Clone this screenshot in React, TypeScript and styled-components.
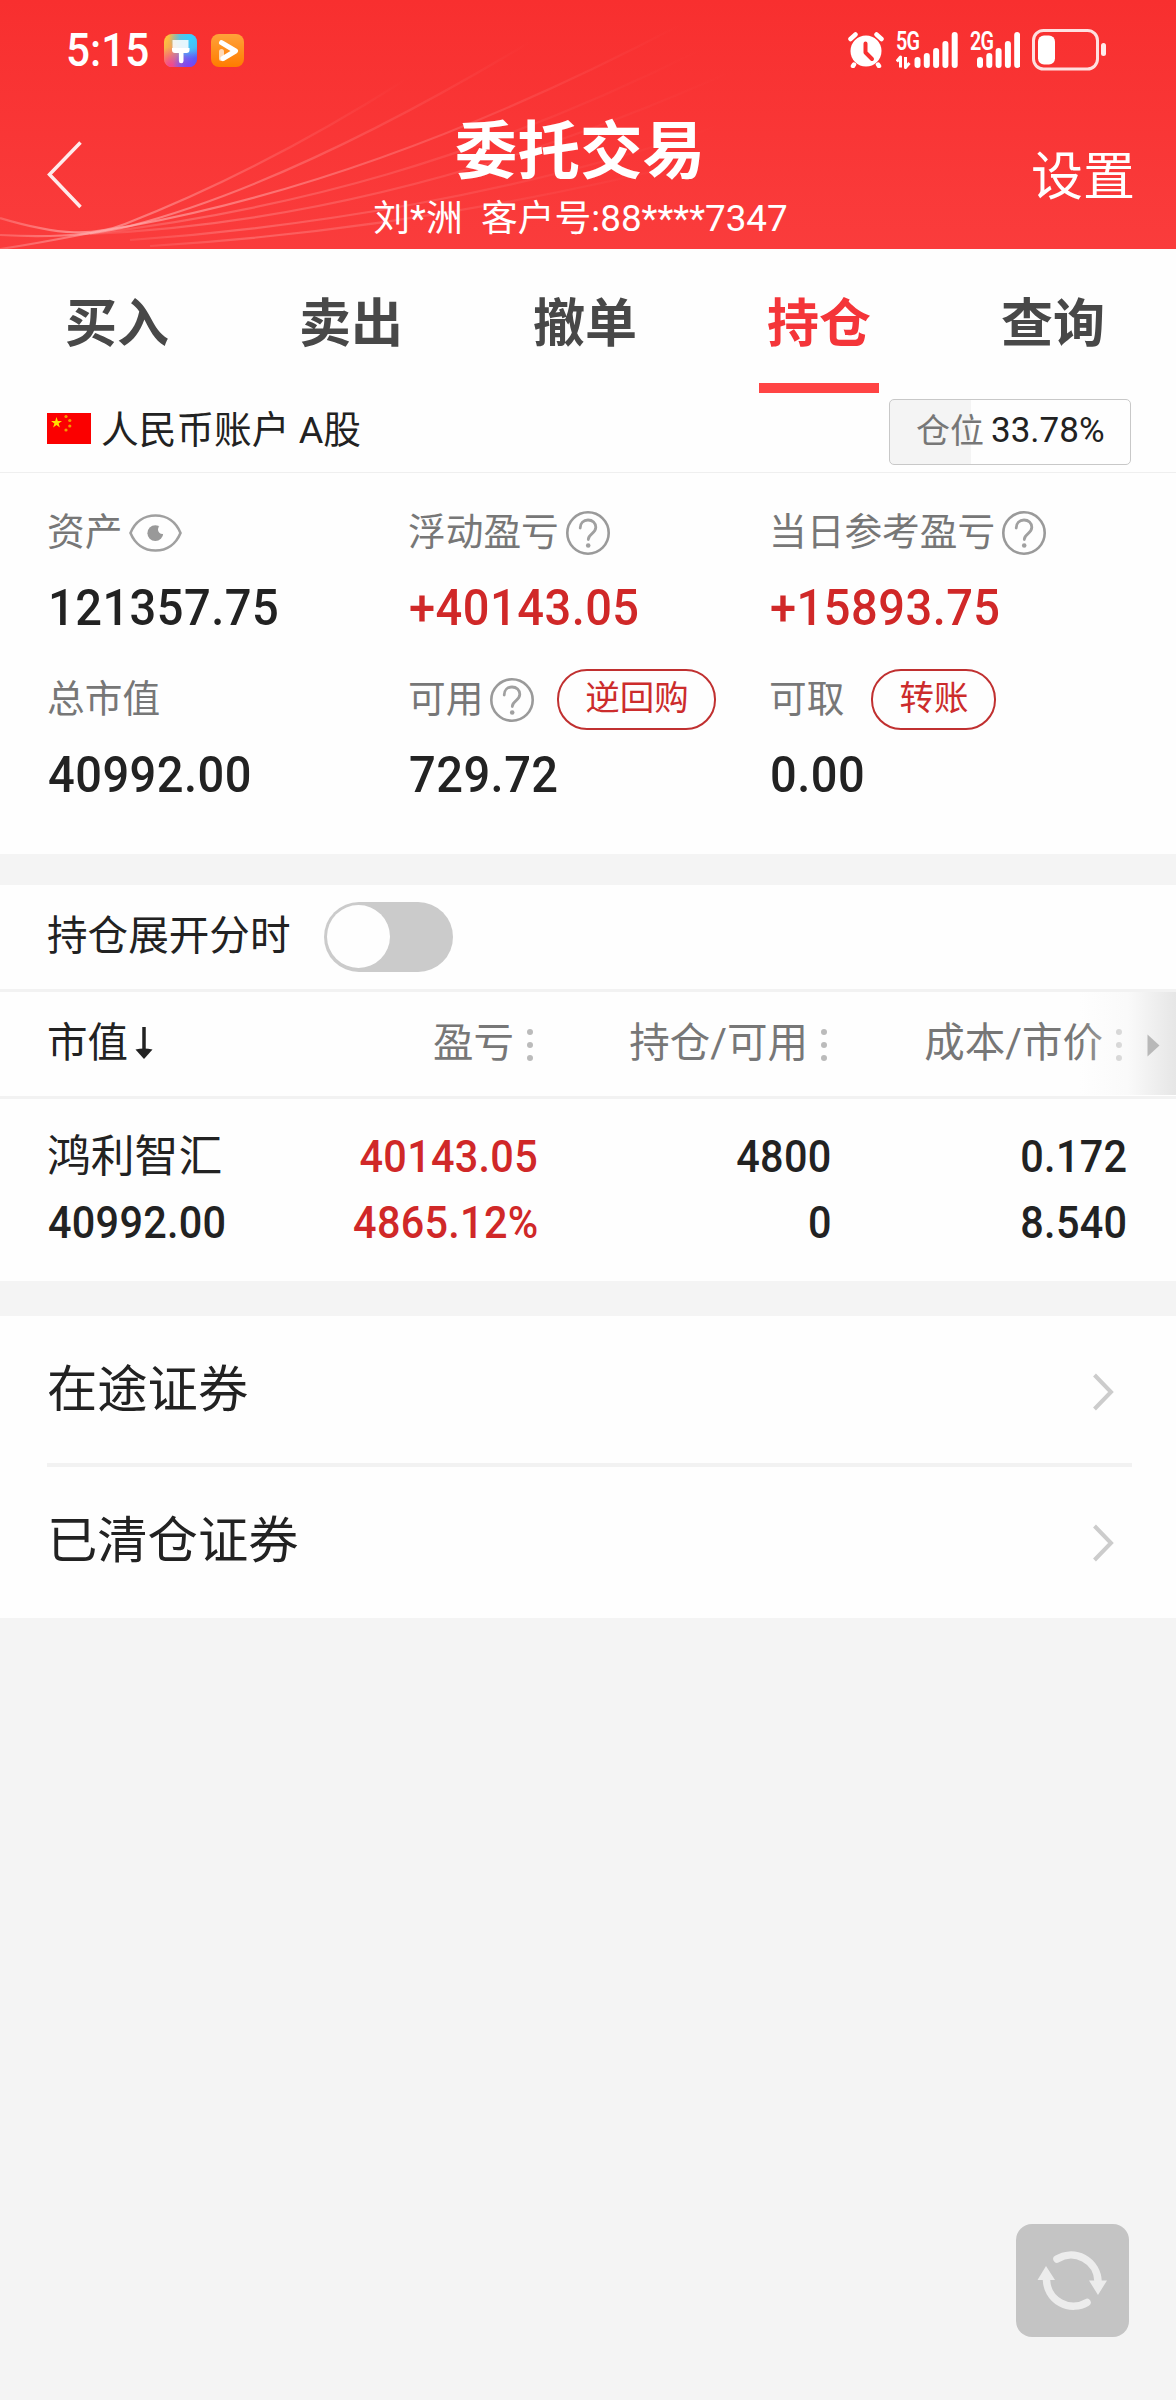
import React, { useState } from 'react';
import styled, { createGlobalStyle } from 'styled-components';

const GlobalStyle = createGlobalStyle`
  * { box-sizing: border-box; }
  body {
    margin: 0;
    background: #f4f4f4;
    color: #222;
    font-family: Roboto, "Noto Sans CJK SC", sans-serif;
  }
  button { font: inherit; border: 0; padding: 0; margin: 0; background: none; color: inherit; cursor: pointer; }
  svg { display: block; flex: none; }
`;

const Page = styled.div`
  position: relative;
  width: 1176px;
  height: 2400px;
  overflow: hidden;
  background: #f4f4f4;
`;

const Header = styled.header`
  position: relative;
  height: 249px;
  color: #fff;
  background: linear-gradient(#f82f2f, #fa3c3c);
`;

const HeaderLines = styled.svg`
  position: absolute;
  left: 0;
  top: 0;
`;

const StatusBar = styled.div`
  position: relative;
  height: 98px;
  display: flex;
  justify-content: space-between;
  padding: 0 70px 0 66px;
`;

const StatusGroup = styled.div<{ $gap: number }>`
  display: flex;
  align-items: center;
  height: 100px;
  gap: ${(p) => p.$gap}px;
`;

const Clock = styled.span`
  width: 84px;
  font-size: 46px;
  font-weight: 500;
  line-height: 54px;
  white-space: nowrap;
  transform: scaleX(0.92);
  transform-origin: left;
`;

const NavBar = styled.div`
  position: relative;
  height: 151px;
  display: grid;
  grid-template-columns: 200px 1fr 200px;
`;

const BackButton = styled.button`
  display: flex;
  align-items: flex-start;
  padding: 42px 0 0 45px;
`;

const TitleBlock = styled.div`
  display: flex;
  flex-direction: column;
  align-items: center;
  padding-top: 19px;
`;

const Title = styled.h1`
  margin: 0 0 0 -16px;
  font-size: 62.6px;
  font-weight: 700;
  line-height: 70px;
`;

const Subtitle = styled.div`
  margin: 10px 0 0 -15px;
  font-size: 36.8px;
  line-height: 44px;
  white-space: pre;
`;

const SettingsButton = styled.button`
  justify-self: end;
  align-self: start;
  margin: 50px 41px 0 0;
  font-size: 52px;
  line-height: 60px;
`;

const Tabs = styled.nav`
  display: grid;
  grid-template-columns: repeat(5, 1fr);
  height: 144px;
  padding-right: 6px;
  background: #fefefe;
`;

const Tab = styled.button<{ $active: boolean }>`
  display: flex;
  flex-direction: column;
  align-items: center;
  justify-content: space-between;
  padding-top: 44px;
  font-size: 52px;
  font-weight: 700;
  line-height: 64px;
  color: ${(p) => (p.$active ? '#f43539' : '#484848')};
  &::after {
    content: '';
    width: 120px;
    height: 10px;
    background: ${(p) => (p.$active ? '#ff4444' : 'transparent')};
  }
`;

const AccountRow = styled.div`
  display: flex;
  align-items: center;
  height: 80px;
  padding: 0 45px 2px 47px;
  background: #fefefe;
  border-bottom: 1px solid #efefef;
`;

const FlagSlot = styled.span`
  margin-bottom: 6px;
`;

const AccountName = styled.span`
  flex: 1;
  margin: 0 0 3px 10px;
  font-size: 37.7px;
  line-height: 46px;
`;

const PositionBox = styled.div`
  display: flex;
  align-items: center;
  width: 242px;
  height: 66px;
  padding: 0 0 2px 26px;
  gap: 7px;
  border: 1px solid #c8c8c8;
  border-radius: 5px;
  background: linear-gradient(to right, #f4f4f4 33.78%, transparent 33.78%);
  font-size: 35px;
  line-height: 60px;
  white-space: nowrap;
`;

const Muted = styled.span`
  color: #777;
  font-size: 34px;
`;

const Summary = styled.section`
  display: grid;
  grid-template-columns: 361px 361px 1fr;
  grid-template-rows: 167px 1fr;
  height: 381px;
  padding: 28px 0 0 47px;
  background: #fefefe;
`;

const SummaryLabel = styled.div`
  display: flex;
  align-items: center;
  height: 64px;
  color: #777;
  font-size: 37.7px;
  line-height: 46px;
  white-space: nowrap;
`;

const LabelText = styled.span`
  margin-top: -3px;
`;

const SummaryValue = styled.div<{ $up?: boolean }>`
  width: 300px;
  margin: 11px 0 0 1px;
  font-size: 50.6px;
  font-weight: 500;
  line-height: 64px;
  letter-spacing: 0.5px;
  transform: scaleX(0.93);
  transform-origin: left;
  color: ${(p) => (p.$up ? '#d02828' : '#222')};
`;

const IconSlot = styled.span<{ $gap: number }>`
  margin-left: ${(p) => p.$gap}px;
`;

const Pill = styled.button<{ $gap: number; $width: number }>`
  width: ${(p) => p.$width}px;
  height: 61px;
  margin: -1px 0 0 ${(p) => p.$gap}px;
  padding-bottom: 4px;
  border: 2px solid #c03030;
  border-radius: 30px;
  color: #cc2c2c;
  font-size: 34.5px;
  line-height: 48px;
`;

const Card = styled.section`
  background: #fefefe;
`;

const Holdings = styled(Card)`
  margin-top: 31px;
  height: 396px;
`;

const SwitchRow = styled.div`
  display: flex;
  align-items: center;
  height: 107px;
  padding: 0 48px;
  border-bottom: 3px solid #f2f2f2;
  font-size: 40.6px;
`;

const SwitchLabel = styled.span`
  width: 277px;
  margin: -9px 0 0 -1px;
`;

const Switch = styled.button<{ $on: boolean }>`
  display: flex;
  justify-content: ${(p) => (p.$on ? 'flex-end' : 'flex-start')};
  width: 129px;
  height: 70px;
  padding: 3px;
  border-radius: 35px;
  background: ${(p) => (p.$on ? '#f43539' : '#cbcbcb')};
  &::after {
    content: '';
    width: 63px;
    height: 63px;
    border-radius: 50%;
    background: #fefefe;
  }
`;

const Columns = styled.div`
  display: grid;
  grid-template-columns: 243px 247px 294px 295px;
`;

const TableHead = styled(Columns)`
  position: relative;
  height: 107px;
  padding: 0 48px;
  border-bottom: 3px solid #f2f2f2;
`;

const HeadCell = styled.div<{ $first?: boolean }>`
  display: flex;
  align-items: center;
  justify-content: ${(p) => (p.$first ? 'flex-start' : 'flex-end')};
  gap: ${(p) => (p.$first ? 7 : 13)}px;
  padding: 0 ${(p) => (p.$first ? 0 : 5)}px 10px 0;
  margin-left: ${(p) => (p.$first ? -1 : 0)}px;
  color: ${(p) => (p.$first ? '#222' : '#777')};
  font-size: 40.5px;
  white-space: nowrap;
`;

const SortArrow = styled.svg`
  margin-top: 4px;
`;

const Dots = styled.span`
  width: 6px;
  height: 6px;
  margin-top: 11px;
  border-radius: 50%;
  background: #bbb;
  box-shadow: 0 -13px #bbb, 0 13px #bbb;
`;

const ScrollShade = styled.div`
  position: absolute;
  right: 0;
  top: 0;
  display: flex;
  align-items: center;
  justify-content: flex-end;
  width: 96px;
  height: 103px;
  padding: 3px 16px 0 0;
  background: linear-gradient(to right, rgba(254, 254, 254, 0), rgba(247, 247, 247, 0.6) 50%, #e6e6e6);
`;

const TableRow = styled(Columns)`
  height: 182px;
  padding: 30px 48px 0;
`;

const Cell = styled.div<{ $first?: boolean; $up?: boolean }>`
  display: flex;
  flex-direction: column;
  gap: 10px;
  align-items: ${(p) => (p.$first ? 'flex-start' : 'flex-end')};
  font-size: 45px;
  font-weight: 500;
  line-height: 56px;
  white-space: nowrap;
  color: ${(p) => (p.$up ? '#d02828' : '#222')};
`;

const Figure = styled.span<{ $left?: boolean }>`
  transform: scaleX(0.92);
  transform-origin: ${(p) => (p.$left ? 'left' : 'right')};
  letter-spacing: 0.3px;
`;

const StockName = styled.span`
  height: 56px;
  margin-left: -1px;
  font-size: 43.8px;
  font-weight: 400;
  line-height: 56px;
`;

const Links = styled(Card)`
  display: flex;
  flex-direction: column;
  height: 302px;
  margin-top: 35px;
  padding: 0 44px 0 47px;
`;

const LinkRow = styled.button`
  display: flex;
  align-items: center;
  justify-content: space-between;
  height: 151px;
  padding: 0 18px 0 0;
  font-size: 50.3px;
  line-height: 60px;
  &:first-child {
    padding-top: 4px;
    border-bottom: 4px solid #f2f2f2;
  }
`;

const LinkText = styled.span`
  margin-top: -4px;
`;

const RefreshButton = styled.button`
  position: absolute;
  left: 1016px;
  top: 2224px;
  display: flex;
  width: 113px;
  height: 113px;
  border-radius: 16px;
  background: #c4c4c4;
`;

const ThemeIcon = () => (
  <svg width="33" height="33" viewBox="0 0 33 33">
    <defs>
      <linearGradient id="theme-a" x1="0" y1="0.2" x2="1" y2="0.8">
        <stop offset="0" stopColor="#ffc23d" />
        <stop offset="0.3" stopColor="#f0a05c" />
        <stop offset="0.62" stopColor="#6c8df5" />
        <stop offset="1" stopColor="#4c5cf6" />
      </linearGradient>
      <radialGradient id="theme-b" cx="0.8" cy="0.1" r="0.65">
        <stop offset="0" stopColor="#35d0ff" />
        <stop offset="0.5" stopColor="#45c8f5" stopOpacity="0.85" />
        <stop offset="1" stopColor="#45c8f5" stopOpacity="0" />
      </radialGradient>
      <radialGradient id="theme-c" cx="0.2" cy="1" r="0.6">
        <stop offset="0" stopColor="#ff3f86" />
        <stop offset="1" stopColor="#ff3f86" stopOpacity="0" />
      </radialGradient>
      <radialGradient id="theme-d" cx="0.75" cy="1" r="0.5">
        <stop offset="0" stopColor="#8a3df0" />
        <stop offset="1" stopColor="#6a4df0" stopOpacity="0" />
      </radialGradient>
    </defs>
    <rect width="33" height="33" rx="8" fill="url(#theme-a)" />
    <rect width="33" height="33" rx="8" fill="url(#theme-b)" />
    <rect width="33" height="33" rx="8" fill="url(#theme-c)" />
    <rect width="33" height="33" rx="8" fill="url(#theme-d)" />
    <path d="M8.500 6h16v8h-16z" fill="#fff" opacity="0.85" />
    <path d="M8 14h17.500v2q0 3-3 3h-3v8a2.300 2.300 0 0 1-4.600 0v-8h-3.900q-3 0-3-3z" fill="#fff" />
  </svg>
);

const VideoIcon = () => (
  <svg width="33" height="33" viewBox="0 0 33 33">
    <defs>
      <linearGradient id="video-bg" x1="0" y1="0" x2="0" y2="1">
        <stop offset="0" stopColor="#ffa23a" />
        <stop offset="1" stopColor="#ff7c00" />
      </linearGradient>
    </defs>
    <rect width="33" height="33" rx="8" fill="url(#video-bg)" />
    <path d="M10.500 17.500v7" stroke="#ffd9b5" strokeWidth="5" strokeLinecap="round" />
    <path d="M10.500 8.700 24.500 17 12 24.500" fill="none" stroke="#fff" strokeWidth="5" strokeLinecap="round" strokeLinejoin="round" />
  </svg>
);

const AlarmIcon = () => (
  <svg width="36" height="36" viewBox="0 0 36 36">
    <circle cx="18" cy="19" r="15.500" fill="#fff" />
    <path d="M2.500 7 7.500 2.500M33.500 7l-5-4.500M6 32.500l-1 1.500M30 32.500l1 1.500" stroke="#fff" strokeWidth="4.500" strokeLinecap="round" />
    <path d="M17.500 11.500v9l6.500 6.500" fill="none" stroke="#f83131" strokeWidth="4" strokeLinecap="round" strokeLinejoin="round" />
  </svg>
);

const Network = styled.div<{ $width: number }>`
  position: relative;
  width: ${(p) => p.$width}px;
  height: 38px;
`;

const NetworkName = styled.span`
  position: absolute;
  left: 0;
  top: -1px;
  font-size: 26px;
  font-weight: 600;
  line-height: 22px;
  letter-spacing: -1px;
  transform: scaleX(0.76);
  transform-origin: left;
`;

const Bars = ({ left, width }: { left: number; width: number }) => (
  <svg width={width} height="38" viewBox={`0 0 ${width} 38`}>
    {[11, 15, 20, 27, 36].map((h, i) => (
      <rect key={h} x={left + i * 9.3} y={37 - h} width="6" height={h} rx="3" fill="#fff" />
    ))}
    {left > 10 && (
      <path d="M0.800 30.500 4.500 26v10.500M9.500 26v10.500l4-4.500" fill="none" stroke="#fff" strokeWidth="3" strokeLinejoin="round" />
    )}
  </svg>
);

const BatteryIcon = () => (
  <svg width="74" height="42" viewBox="0 0 74 42">
    <rect x="1.500" y="1.500" width="64" height="38.500" rx="10" fill="none" stroke="#fff" strokeOpacity="0.85" strokeWidth="3" />
    <rect x="6" y="6.500" width="17" height="29" rx="6" fill="#fff" />
    <rect x="69" y="14" width="5" height="13" rx="2.500" fill="#fff" fillOpacity="0.9" />
  </svg>
);

const FlagIcon = () => (
  <svg width="44" height="31" viewBox="0 0 44 31">
    <rect width="44" height="31" fill="#fb0000" />
    <path d="M9.500 4l1.300 4h4.200l-3.400 2.500 1.300 4-3.400-2.500-3.400 2.500 1.300-4L4 8h4.200z" fill="#ffe000" />
    <g fill="#f39a00">
      <circle cx="19" cy="3.500" r="1.600" />
      <circle cx="22.800" cy="7.500" r="1.600" />
      <circle cx="22.800" cy="13" r="1.600" />
      <circle cx="19" cy="17" r="1.600" />
    </g>
  </svg>
);

const EyeIcon = () => (
  <svg width="53" height="38" viewBox="0 0 53 38">
    <path d="M1.500 19C6 8 15 1.500 26.500 1.500S47 8 51.500 19C47 30 38 36.500 26.500 36.500S6 30 1.500 19z" fill="none" stroke="#a0a0a0" strokeWidth="2.600" />
    <circle cx="26.300" cy="19.200" r="7.900" fill="#999" />
    <circle cx="33.500" cy="15.500" r="4.500" fill="#fefefe" />
  </svg>
);

const HelpIcon = () => (
  <svg width="44" height="44" viewBox="0 0 44 44">
    <circle cx="22" cy="22" r="20.700" fill="none" stroke="#9a9a9a" strokeWidth="2.600" />
    <path d="M14.200 17c0-5 3.300-8 7.800-8s7.800 3 7.800 7.300c0 3.300-2 4.900-4 6.500-2 1.600-3.500 2.900-3.500 5.700" fill="none" stroke="#a0a0a0" strokeWidth="2.800" strokeLinecap="round" />
    <circle cx="22.200" cy="34.500" r="2.300" fill="#a0a0a0" />
  </svg>
);

const ChevronIcon = () => (
  <svg width="22" height="38" viewBox="0 0 22 38">
    <path d="M2.500 2 19 19 2.500 36" fill="none" stroke="#ccc" strokeWidth="4" />
  </svg>
);

const curves = [
  'M0 218C60 236 95 236 125 224C220 187 310 140 405 80',
  'M0 235C50 238 90 236 130 226C260 192 400 120 530 42',
  'M0 249C60 240 90 232 130 226C300 195 480 130 680 25',
  'M90 234C290 210 480 160 700 50',
  'M90 234C290 225 500 175 730 72',
  'M130 240C300 228 520 195 720 125',
  'M150 246C330 235 520 205 700 160',
];

const summary = [
  { label: '资产', icon: 'eye', value: '121357.75' },
  { label: '浮动盈亏', icon: 'help', value: '+40143.05', up: true },
  { label: '当日参考盈亏', icon: 'help', value: '+15893.75', up: true },
  { label: '总市值', value: '40992.00' },
  { label: '可用', icon: 'help', value: '729.72', action: '逆回购', actionGap: 23, actionWidth: 159 },
  { label: '可取', value: '0.00', action: '转账', actionGap: 27, actionWidth: 125 },
];

const tabs = ['买入', '卖出', '撤单', '持仓', '查询'];

export default function App() {
  const [tab, setTab] = useState('持仓');
  const [expanded, setExpanded] = useState(false);

  return (
    <>
      <GlobalStyle />
      <Page>
        <Header>
          <HeaderLines width="760" height="249" viewBox="0 0 760 249">
            <defs>
              <linearGradient id="fade" x1="0" y1="0" x2="1" y2="0">
                <stop offset="0" stopColor="#ffb0b0" stopOpacity="0.35" />
                <stop offset="0.18" stopColor="#ffb0b0" stopOpacity="0.75" />
                <stop offset="0.42" stopColor="#ffa0a0" stopOpacity="0.6" />
                <stop offset="0.72" stopColor="#ff9090" stopOpacity="0.25" />
                <stop offset="1" stopColor="#ff9090" stopOpacity="0" />
              </linearGradient>
            </defs>
            {curves.map((d, i) => (
              <path key={d} d={d} fill="none" stroke="url(#fade)" strokeWidth="2.200" opacity={i < 3 ? 0.9 : 0.45} />
            ))}
          </HeaderLines>
          <StatusBar>
            <StatusGroup $gap={14}>
              <Clock>5:15</Clock>
              <ThemeIcon />
              <VideoIcon />
            </StatusGroup>
            <StatusGroup $gap={12}>
              <AlarmIcon />
              <Network $width={62}>
                <NetworkName>5G</NetworkName>
                <Bars left={18.5} width={62} />
              </Network>
              <Network $width={50}>
                <NetworkName>2G</NetworkName>
                <Bars left={7} width={50} />
              </Network>
              <BatteryIcon />
            </StatusGroup>
          </StatusBar>
          <NavBar>
            <BackButton aria-label="返回">
              <svg width="38" height="70" viewBox="0 0 38 70">
                <path d="M35.500 2.500 4.500 34.500 35.500 67" fill="none" stroke="#fff" strokeOpacity="0.9" strokeWidth="3.500" />
              </svg>
            </BackButton>
            <TitleBlock>
              <Title>委托交易</Title>
              <Subtitle>{'刘*洲  客户号:88****7347'}</Subtitle>
            </TitleBlock>
            <SettingsButton>设置</SettingsButton>
          </NavBar>
        </Header>

        <Tabs>
          {tabs.map((name) => (
            <Tab key={name} $active={name === tab} onClick={() => setTab(name)}>
              {name}
            </Tab>
          ))}
        </Tabs>

        <AccountRow>
          <FlagSlot>
            <FlagIcon />
          </FlagSlot>
          <AccountName>人民币账户 A股</AccountName>
          <PositionBox>
            <Muted>仓位</Muted>
            <span>33.78%</span>
          </PositionBox>
        </AccountRow>

        <Summary>
          {summary.map((s) => (
            <div key={s.label}>
              <SummaryLabel>
                <LabelText>{s.label}</LabelText>
                {s.icon && (
                  <IconSlot $gap={7}>{s.icon === 'eye' ? <EyeIcon /> : <HelpIcon />}</IconSlot>
                )}
                {s.action && (
                  <Pill $gap={s.actionGap!} $width={s.actionWidth!}>
                    {s.action}
                  </Pill>
                )}
              </SummaryLabel>
              <SummaryValue $up={s.up}>{s.value}</SummaryValue>
            </div>
          ))}
        </Summary>

        <Holdings>
          <SwitchRow>
            <SwitchLabel>持仓展开分时</SwitchLabel>
            <Switch $on={expanded} aria-label="持仓展开分时" onClick={() => setExpanded(!expanded)} />
          </SwitchRow>
          <TableHead>
            <HeadCell $first>
              市值
              <SortArrow width="18" height="36" viewBox="0 0 18 36">
                <path d="M9 4v24" stroke="#222" strokeWidth="3.500" />
                <path d="M0.500 26.500q8.500-2 17 0L9 36z" fill="#222" />
              </SortArrow>
            </HeadCell>
            <HeadCell>盈亏<Dots /></HeadCell>
            <HeadCell>持仓/可用<Dots /></HeadCell>
            <HeadCell>成本/市价<Dots /></HeadCell>
            <ScrollShade>
              <svg width="13" height="23" viewBox="0 0 13 23">
                <path d="M0.500 0.500 12.500 11.500 0.500 22.500z" fill="#b8b8b8" />
              </svg>
            </ScrollShade>
          </TableHead>
          <TableRow>
            <Cell $first>
              <StockName>鸿利智汇</StockName>
              <Figure $left>40992.00</Figure>
            </Cell>
            <Cell $up>
              <Figure>40143.05</Figure>
              <Figure>4865.12%</Figure>
            </Cell>
            <Cell>
              <Figure>4800</Figure>
              <Figure>0</Figure>
            </Cell>
            <Cell>
              <Figure>0.172</Figure>
              <Figure>8.540</Figure>
            </Cell>
          </TableRow>
        </Holdings>

        <Links>
          <LinkRow>
            <LinkText>在途证券</LinkText>
            <ChevronIcon />
          </LinkRow>
          <LinkRow>
            <LinkText>已清仓证券</LinkText>
            <ChevronIcon />
          </LinkRow>
        </Links>

        <RefreshButton aria-label="刷新">
          <svg width="113" height="113" viewBox="0 0 113 113">
            <g fill="none" stroke="#ececec" strokeWidth="7.500" strokeLinecap="round">
              <path d="M41 35A27 27 0 0 1 82 57" />
              <path d="M71 78.500A27 27 0 0 1 30.500 56" />
            </g>
            <path d="M73 56.500h18L82 71zM21.500 56h17.500L30 42z" fill="#ececec" />
          </svg>
        </RefreshButton>
      </Page>
    </>
  );
}
